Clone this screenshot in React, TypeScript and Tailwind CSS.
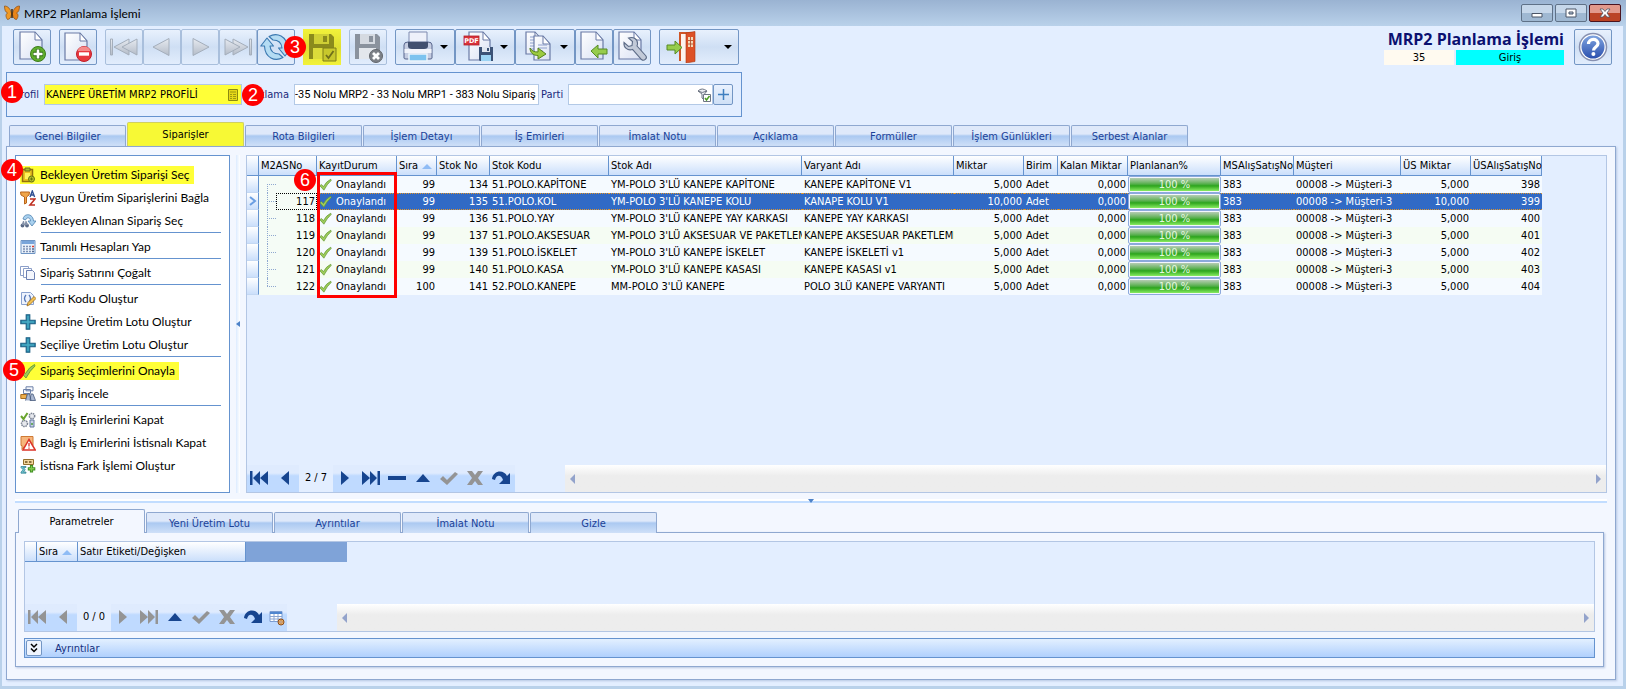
import React from "react";
import clsx from "clsx";

interface Order {
  no: string;
  sira: string;
  stokNo: string;
  stokKodu: string;
  stokAdi: string;
  varyant: string;
  miktar: string;
  usNo: string;
}

const orders: Order[] = [
  { no: "", sira: "99", stokNo: "134", stokKodu: "51.POLO.KAPİTONE", stokAdi: "YM-POLO 3'LÜ KANEPE KAPİTONE", varyant: "KANEPE KAPİTONE V1", miktar: "5,000", usNo: "398" },
  { no: "117", sira: "99", stokNo: "135", stokKodu: "51.POLO.KOL", stokAdi: "YM-POLO 3'LÜ KANEPE KOLU", varyant: "KANAPE KOLU V1", miktar: "10,000", usNo: "399" },
  { no: "118", sira: "99", stokNo: "136", stokKodu: "51.POLO.YAY", stokAdi: "YM-POLO 3'LÜ KANEPE YAY KARKASI", varyant: "KANEPE YAY KARKASI", miktar: "5,000", usNo: "400" },
  { no: "119", sira: "99", stokNo: "137", stokKodu: "51.POLO.AKSESUAR", stokAdi: "YM-POLO 3'LÜ AKSESUAR VE PAKETLEME", varyant: "KANEPE AKSESUAR PAKETLEME", miktar: "5,000", usNo: "401" },
  { no: "120", sira: "99", stokNo: "139", stokKodu: "51.POLO.İSKELET", stokAdi: "YM-POLO 3'LÜ KANEPE İSKELET", varyant: "KANEPE İSKELETİ v1", miktar: "5,000", usNo: "402" },
  { no: "121", sira: "99", stokNo: "140", stokKodu: "51.POLO.KASA", stokAdi: "YM-POLO 3'LÜ KANEPE KASASI", varyant: "KANEPE KASASI v1", miktar: "5,000", usNo: "403" },
  { no: "122", sira: "100", stokNo: "141", stokKodu: "52.POLO.KANEPE", stokAdi: "MM-POLO 3'LÜ KANEPE", varyant: "POLO 3LÜ KANEPE VARYANTI", miktar: "5,000", usNo: "404" },
];

const columns = [
  { label: "", width: "w-[12px]" },
  { label: "M2ASNo", width: "w-[58px]" },
  { label: "KayıtDurum", width: "w-[80px]" },
  { label: "Sıra", width: "w-[40px]", sorted: true },
  { label: "Stok No", width: "w-[53px]" },
  { label: "Stok Kodu", width: "w-[119px]" },
  { label: "Stok Adı", width: "w-[193px]" },
  { label: "Varyant Adı", width: "w-[152px]" },
  { label: "Miktar", width: "w-[70px]" },
  { label: "Birim", width: "w-[34px]" },
  { label: "Kalan Miktar", width: "w-[70px]" },
  { label: "Planlanan%", width: "w-[93px]" },
  { label: "MSAlışSatışNo", width: "w-[73px]" },
  { label: "Müşteri", width: "w-[107px]" },
  { label: "ÜS Miktar", width: "w-[70px]" },
  { label: "ÜSAlışSatışNo", width: "w-[71px]" },
];

const mainTabs = [
  "Genel Bilgiler",
  "Siparişler",
  "Rota Bilgileri",
  "İşlem Detayı",
  "İş Emirleri",
  "İmalat Notu",
  "Açıklama",
  "Formüller",
  "İşlem Günlükleri",
  "Serbest Alanlar",
];

const detailTabs = ["Parametreler", "Yeni Üretim Lotu", "Ayrıntılar", "İmalat Notu", "Gizle"];

/* ---------- toolbar icons (32x32) ---------- */

const Page = ({ x = 6, y = 1, w = 22, h = 27 }: { x?: number; y?: number; w?: number; h?: number }) => (
  <>
    <path
      d={`M${x} ${y}h${w - 7}l7 8v${h - 8}h-${w}z`}
      fill="url(#paper)"
      stroke="#6a7ba6"
      strokeWidth="1.2"
    />
    <path d={`M${x + w - 7} ${y}v8h7z`} fill="#fff" stroke="#6a7ba6" strokeWidth="1" />
  </>
);

const Icon32 = ({ children }: { children: React.ReactNode }) => (
  <svg viewBox="0 0 32 32" className="size-8 shrink-0" aria-hidden="true">
    {children}
  </svg>
);

const NewIcon = () => (
  <Icon32>
    <Page x={4} />
    <circle cx="22" cy="23" r="7.500" fill="#5fae2c" stroke="#3d7d1c" />
    <path d="M22 18v10M17 23h10" stroke="#2f6a14" strokeWidth="4.400" />
    <path d="M22 18.500v9M17.500 23h9" stroke="#fff" strokeWidth="2.600" />
  </Icon32>
);

const DeleteIcon = () => (
  <Icon32>
    <Page x={3} y={2} />
    <circle cx="22" cy="23" r="7.500" fill="#e8383f" stroke="#c01f2a" />
    <path d="M15.500 20a7 7 0 0 1 13 0z" fill="#f58a8a" />
    <path d="M17 23h10" stroke="#fff" strokeWidth="3.400" />
  </Icon32>
);

const FirstIcon = () => (
  <Icon32>
    <g fill="url(#grey)" stroke="#a4aebb">
      <path d="M2.500 8h2v16h-2z" />
      <path d="M21 8v16L6 16z" />
      <path d="M29 8v16L14 16z" />
    </g>
  </Icon32>
);
const PrevIcon = () => (
  <Icon32>
    <path d="M23 7.500v17L7 16z" fill="url(#grey)" stroke="#a4aebb" />
  </Icon32>
);
const NextIcon = () => (
  <Icon32>
    <path d="M9 7.500v17L25 16z" fill="url(#grey)" stroke="#a4aebb" />
  </Icon32>
);
const LastIcon = () => (
  <Icon32>
    <g fill="url(#grey)" stroke="#a4aebb">
      <path d="M11 8v16l15-8z" />
      <path d="M3 8v16l15-8z" />
      <path d="M27.500 8h2v16h-2z" />
    </g>
  </Icon32>
);

const RefreshIcon = () => (
  <Icon32>
    <g fill="#b4dcf3" stroke="#3a78b0" strokeWidth="1.100" strokeLinejoin="round">
      <path d="M.8 15 7 7l6.500 8H10c.5 5 4 8 9 8l4 3.500C15 31 5 27 4.500 15z" />
      <path d="M31.200 17 25 25l-6.500-8H22c-.5-5-4-8-9-8L9 5.500C17 1 27 5 27.500 17z" />
    </g>
  </Icon32>
);

const Floppy = ({ body, metal, label }: { body: string; metal: string; label: string }) => (
  <>
    <path d="M3 3h22l3 3v22H3z" fill={body} />
    <path d="M8 3h15v10H8z" fill={metal} />
    <path d="M17 5h4v6h-4z" fill={body} />
    <path d="M7 17h17v11H7z" fill={label} />
  </>
);

const SaveOkIcon = () => (
  <Icon32>
    <Floppy body="#8b8b1c" metal="#cfcf35" label="#dcdc3a" />
    <path d="M17 17h13v13H17z" fill="#c8c82c" stroke="#7f7f1a" />
    <path d="m20 24 2.500 3 5-7" fill="none" stroke="#70701a" strokeWidth="1.800" />
  </Icon32>
);
const SaveCancelIcon = () => (
  <Icon32>
    <Floppy body="#8a929d" metal="#d5dae1" label="#e3e7ec" />
    <circle cx="24" cy="25" r="6.500" fill="#7d8187" stroke="#62666c" />
    <path d="m21 22 6 6m0-6-6 6" stroke="#fff" strokeWidth="2.800" />
  </Icon32>
);

const PrintIcon = () => (
  <Icon32>
    <path d="M7 1h18v13H7z" fill="#eef1fa" stroke="#7f8bb0" />
    <path d="M2 14q0-3 4-3h20q4 0 4 3v13q0 1-2 1H4q-2 0-2-1z" fill="#c5cde2" stroke="#56648c" />
    <path d="M6 11h20v4q0 3-4 3H10q-4 0-4-3z" fill="#42506f" />
    <path d="M2.500 18h27v4h-27z" fill="#f1f4fb" />
    <path d="M7 23h18v7H7z" fill="#7cc3ef" stroke="#eaf4fc" strokeWidth="1.500" />
  </Icon32>
);

const PdfIcon = () => (
  <Icon32>
    <Page x={7} w={21} h={28} />
    <rect x="2" y="5" width="15" height="9" fill="#d9323a" stroke="#b11f28" strokeWidth=".8" />
    <text x="9.500" y="12.200" textAnchor="middle" fontSize="6.500" fontWeight="700" fill="#fff" fontFamily="DejaVu Sans">
      PDF
    </text>
    <path d="M17 16h14v14H18l-1-1z" fill="#3c5377" />
    <path d="M20 16h8v5h-8z" fill="#dfe6f0" />
    <path d="M25 17h2v3h-2z" fill="#3c5377" />
    <path d="M19 24h10v6H19z" fill="#9cd4f4" />
  </Icon32>
);

const CopyIcon = () => (
  <Icon32>
    <Page x={4} y={1} w={16} h={22} />
    <path d="M8 6h5M8 9h8M8 12h5M8 15h4M8 18h4" stroke="#8ea0cc" />
    <Page x={12} y={5} w={16} h={24} />
    <path d="M16 14h9M16 17h9M16 20h5" stroke="#8ea0cc" />
    <path d="M8 17c2 3 4 4 8 4v-4l8 6-8 5v-3.500c-5 0-8-3-8-7.500z" fill="#9ccb3f" stroke="#56821f" />
  </Icon32>
);

const ImportIcon = () => (
  <Icon32>
    <Page x={3} />
    <path d="M13 20l7-6v4h9v5h-9v4z" fill="#96cc4c" stroke="#568a25" />
  </Icon32>
);

const ToolIcon = () => (
  <Icon32>
    <Page x={3} />
    <path
      d="M8 11.500l4.500 4 3.500-1 .5-4-4-3.500c5-1.500 9 1 9 5.500 0 1-.3 2-.5 2.500l9 10c1.500 2.500-2 5.500-4.500 3.500l-9-10c-5 1.500-9-2-8.500-7z"
      fill="#c2cad8"
      stroke="#5c6b86"
      strokeWidth="1.100"
    />
  </Icon32>
);

const ExitIcon = () => (
  <Icon32>
    <path d="M14 30V2h14v27" fill="#fdf3ee" stroke="#cf5526" strokeWidth="2" />
    <path d="M20 2l9-1.500v30L20 32z" fill="#dd5127" stroke="#a93914" strokeWidth=".6" />
    <path d="M22 6h5v10h-5z" fill="#f4d9b8" />
    <path d="M24.500 6v10M22 9.500h5M22 13h5" stroke="#b4502d" strokeWidth=".9" />
    <path d="M1 14h8v-4l7 6.500L9 23v-4H1z" fill="#96cc4c" stroke="#568a25" />
  </Icon32>
);

const HelpIcon = () => (
  <Icon32>
    <circle cx="16" cy="16" r="13.500" fill="#fff" stroke="#8790b0" strokeWidth="1.500" />
    <circle cx="16" cy="16" r="11.500" fill="url(#help)" />
    <path d="M11.500 13c0-6 9.500-6 9.500-.5 0 3.500-4.500 3.500-4.500 7" fill="none" stroke="#fff" strokeWidth="3.200" />
    <circle cx="16.400" cy="23" r="2" fill="#fff" />
  </Icon32>
);

/* ---------- side menu icons (16x16) ---------- */

const Icon16 = ({ children }: { children: React.ReactNode }) => (
  <svg viewBox="0 0 16 16" className="size-4 shrink-0" aria-hidden="true">
    {children}
  </svg>
);

const Tick = () => (
  <path d="M1 9.500 3 8l2.500 2.500Q9 4 14.500 1.500L15 3Q10 7.500 6 15z" fill="#9ccb5a" stroke="#5d9130" strokeWidth=".8" />
);

const ClipboardIcon = () => (
  <Icon16>
    <path d="M2.500 2.500h10v12h-10z" fill="#e9c320" stroke="#94700c" strokeWidth="1.500" />
    <path d="M5 1h5v3H5z" fill="#a8b530" stroke="#6a6a20" />
    <path d="M5 6h5v6H5z" fill="#fff45a" />
    <circle cx="11.500" cy="12" r="3" fill="#b7c02c" stroke="#66740f" />
    <path d="M11.500 10.500v3M10 12h3" stroke="#66740f" />
  </Icon16>
);
const FilterSortIcon = () => (
  <Icon16>
    <path d="M.5 2h9L9 5 6.500 7v6l-2 1V7L1 5z" fill="#f0a64a" stroke="#b9651c" />
    <path d="m10 7 2.300-6L14.600 7M11 5h3" fill="none" stroke="#2f4f92" strokeWidth="1.400" />
    <path d="M10 9h5l-5 6h5" fill="none" stroke="#c03022" strokeWidth="1.600" />
  </Icon16>
);
const SearchOrderIcon = () => (
  <Icon16>
    <path d="M3 6c1-6 10-6 10.500 2H16l-4 5-4-5h2.500c0-4-4-4-5-1z" fill="#a9d1ef" stroke="#4b80ae" strokeWidth=".8" />
    <circle cx="2.500" cy="12.500" r="1.900" fill="#5a6a86" />
    <circle cx="7" cy="12.500" r="1.900" fill="#5a6a86" />
    <path d="M1.500 12 3 8h1l.8 3L5.500 8h1L8 12z" fill="#8491a8" />
  </Icon16>
);
const CalculatorIcon = () => (
  <Icon16>
    <path d="M1 1.500h14v13H1z" fill="#e9f1fa" stroke="#6d94c4" />
    <path d="M1.500 2h13v3h-13z" fill="#78a5da" />
    <path d="M3 7.500h2m1 0h2m1 0h2M3 10h2m1 0h2m1 0h2M3 12.500h2m1 0h2m1 0h2" stroke="#7d91b4" strokeWidth="1.500" />
    <path d="M12 7.500h2" stroke="#e23e2c" strokeWidth="1.500" />
    <path d="M12 10h2m-2 2.500h2" stroke="#56698e" strokeWidth="1.500" />
  </Icon16>
);
const DuplicateIcon = () => (
  <Icon16>
    <path d="M.5 1.500h8v9h-8z" fill="#fff" stroke="#8c9fc9" />
    <path d="M3.500 3.500h8v9h-8z" fill="#fff" stroke="#8c9fc9" />
    <path d="M6.500 5.500h6l2 2v7h-8z" fill="#f3f6fd" stroke="#6d81b3" />
  </Icon16>
);
const CodeIcon = () => (
  <Icon16>
    <path d="M1.500 1.500h9l3 3v9h-12z" fill="#eef3fd" stroke="#8aa2cf" />
    <path d="M6 4Q3 7.500 6 11M9 4q3 3.500 0 7" fill="none" stroke="#5779b8" strokeWidth="1.300" />
    <path d="m7 15 1-3.500L14 5.500l2 2-6 6z" fill="#f1c053" stroke="#9a6a1c" strokeWidth=".8" />
  </Icon16>
);
const PlusIcon = () => (
  <Icon16>
    <path d="M6.200.8h3.600v5.400h5.400v3.600H9.800v5.400H6.200V9.800H.8V6.200h5.400z" fill="#2b8eae" stroke="#1b5f85" strokeWidth="1.100" />
    <path d="M8 2v12M2 8h12" stroke="#53b2ca" strokeWidth="1" />
  </Icon16>
);
const ApproveIcon = () => (
  <Icon16>
    <Tick />
  </Icon16>
);
const InspectIcon = () => (
  <Icon16>
    <path d="M6 .8h7v4H6zM3.500 3.500h7v4h-7z" fill="#f6f8fd" stroke="#6d81a8" />
    <path d="M.8 8.500h6v4h-6z" fill="#edaf4c" stroke="#a86d20" />
    <path d="M5.500 14.500 7.500 8h2L11 14.500M10 14.500 11 8h2l2.500 6.500z" fill="#a9b7d1" stroke="#475a7c" strokeWidth=".8" />
  </Icon16>
);
const GearsIcon = () => (
  <Icon16>
    <circle cx="12" cy="4" r="2.700" fill="#e7e9ee" stroke="#7b8393" strokeWidth="1.500" strokeDasharray="1.500 .7" />
    <circle cx="4.500" cy="11.500" r="3" fill="#e7e9ee" stroke="#7b8393" strokeWidth="1.500" strokeDasharray="1.500 .7" />
    <path d="m1 4 2.500 3 4-6" fill="none" stroke="#6aa52e" strokeWidth="2" />
    <path d="M10 8h4v7h-4z" fill="#c7d1e6" stroke="#63779f" />
    <circle cx="12" cy="12" r="1" fill="#4a9c38" />
  </Icon16>
);
const WarningIcon = () => (
  <Icon16>
    <path d="M1 1.500h12v9H5l-3 4v-4H1z" fill="#f6b67c" stroke="#cf7a34" />
    <path d="m9 4.500 6.300 10.500H3z" fill="#fff" stroke="#dc3328" strokeWidth="1.500" />
    <path d="M9 8v3.500m0 1v1.300" stroke="#dc3328" strokeWidth="1.300" />
  </Icon16>
);
const DiffIcon = () => (
  <Icon16>
    <path d="M3.500 1.500h10v5h-10z" fill="#f3d79d" stroke="#94702c" />
    <path d="M5 4h2.500M9 4h2.500" stroke="#6c5020" strokeWidth="1.600" />
    <path d="M1 8.500h5v1H3.500l1.700 2.200L3.500 14H6v1.200H1v-1l2-2.500-2-2.200z" fill="#6fc3cd" stroke="#2b7d90" strokeWidth=".7" />
    <path d="M11.500 7v7.500M7.800 10.800h7.500" stroke="#3e8d22" strokeWidth="3.200" />
    <path d="M11.500 8v5.500M8.800 10.800h5.500" stroke="#80c94c" strokeWidth="1.400" />
  </Icon16>
);

const menuItems = [
  { label: "Bekleyen Üretim Siparişi Seç", icon: <ClipboardIcon />, step: 4 },
  { label: "Uygun Üretim Siparişlerini Bağla", icon: <FilterSortIcon /> },
  { label: "Bekleyen Alınan Sipariş Seç", icon: <SearchOrderIcon />, divider: true },
  { label: "Tanımlı Hesapları Yap", icon: <CalculatorIcon />, divider: true },
  { label: "Sipariş Satırını Çoğalt", icon: <DuplicateIcon />, divider: true },
  { label: "Parti Kodu Oluştur", icon: <CodeIcon /> },
  { label: "Hepsine Üretim Lotu Oluştur", icon: <PlusIcon /> },
  { label: "Seçiliye Üretim Lotu Oluştur", icon: <PlusIcon />, divider: true },
  { label: "Sipariş Seçimlerini Onayla", icon: <ApproveIcon />, step: 5 },
  { label: "Sipariş İncele", icon: <InspectIcon />, divider: true },
  { label: "Bağlı İş Emirlerini Kapat", icon: <GearsIcon /> },
  { label: "Bağlı İş Emirlerini İstisnalı Kapat", icon: <WarningIcon /> },
  { label: "İstisna Fark İşlemi Oluştur", icon: <DiffIcon /> },
];

/* ---------- shared pieces ---------- */

const Step = ({ n, className }: { n: number; className: string }) => (
  <span
    className={clsx(
      "absolute z-20 flex size-[22px] items-center justify-center rounded-full bg-[#ff0000] font-['Liberation_Sans'] text-[18px] leading-none text-white",
      className
    )}
  >
    {n}
  </span>
);

interface ToolButtonProps {
  label: string;
  icon: React.ReactNode;
  width?: string;
  drop?: boolean;
  dim?: boolean;
  className?: string;
}

const ToolButton = ({ label, icon, width = "w-[38px]", drop, dim, className }: ToolButtonProps) => (
  <button
    type="button"
    aria-label={label}
    className={clsx(
      "flex h-9 shrink-0 items-center rounded-xs border bg-linear-to-b from-[#e8f1fd] via-[#cfdff4] to-[#e2edfc]",
      dim ? "border-[#a9bfdc]" : "border-[#7396c4]",
      drop ? "justify-between pr-1.5 pl-1.5" : "justify-center",
      width,
      className
    )}
  >
    {icon}
    {drop && <svg viewBox="0 0 8 4" className="h-1 w-2" aria-hidden="true"><path d="M0 0h8L4 4z" /></svg>}
  </button>
);

const Tab = ({ label, width, active, marked }: { label: string; width: string; active?: boolean; marked?: boolean }) => (
  <button
    type="button"
    role="tab"
    aria-selected={!!active}
    className={clsx(
      "shrink-0 rounded-t-xs border border-b-0 text-center",
      width,
      active
        ? "h-6 text-black"
        : "h-[21px] border-[#8fa8d0] bg-linear-to-b from-[#dfe9fa] from-40% via-[#abc9f1] via-50% to-[#cfe0f8] text-[#1b4298]",
      active && (marked ? "border-[#d0d060] bg-[#f7f935]" : "border-[#8fa8d0] bg-[#f3f7ff]")
    )}
  >
    {label}
  </button>
);

const SortMark = () => (
  <svg viewBox="0 0 10 5" className="ml-1 inline h-[5px] w-[10px] align-middle" aria-hidden="true">
    <path d="M0 5h10L5 0z" fill="#8fbcf5" />
  </svg>
);

const navShapes = {
  first: "M0 1h2.500v14H0zM10 1v14L3 8zM18 1v14L10 8z",
  prev: "M13 1v14L5 8z",
  next: "M5 1v14l8-7z",
  last: "M15.500 1H18v14h-2.500zM0 1v14l8-7zM8 1v14l7-7z",
  minus: "M0 6h18v4H0z",
  up: "M9 4l7 8H2z",
  check: "M0 9l3-3 4 4 8-8 3 2L7 15z",
  cross: "M1 1h5l3 4 3-4h5l-5 7 5 7h-5l-3-4-3 4H1l5-7z",
  redo: "M0 9C1 0 12-1 15 6l3-3v11H7l4-4C9 4 4 5 3 10z",
};

const NavButton = ({ shape, label, off, width }: { shape: keyof typeof navShapes; label: string; off?: boolean; width: string }) => (
  <button type="button" aria-label={label} className={clsx("flex h-full items-center justify-center pr-0.5 pb-0.5", width)}>
    <svg viewBox="0 0 18 16" className="h-4 w-[18px]" aria-hidden="true">
      <path d={navShapes[shape]} fill={off ? "#949494" : "#17458f"} />
    </svg>
  </button>
);

const navBg = "flex h-full bg-linear-to-b from-[#dfebfe] from-30% to-[#bfdaff] to-40%";

const ScrollTrack = ({ className }: { className: string }) => (
  <div className={clsx("flex h-full flex-1 items-center justify-between bg-linear-to-b from-white to-[#ededed] to-40% px-[5px]", className)}>
    <svg viewBox="0 0 5 10" className="h-[10px] w-[5px]" aria-hidden="true"><path d="M5 0v10L0 5z" fill="#93a3cb" /></svg>
    <svg viewBox="0 0 5 10" className="h-[10px] w-[5px]" aria-hidden="true"><path d="M0 0v10l5-5z" fill="#93a3cb" /></svg>
  </div>
);

const headCell = "border-r border-b border-[#6593cf] bg-linear-to-b from-white to-[#cbdffb] pl-0.5 text-left font-normal";

const OrderRow = ({ order, index }: { order: Order; index: number }) => {
  const selected = index === 1;
  const last = index === orders.length - 1;
  const line = selected ? "border-y border-dotted border-[#e0952c]" : "";
  return (
    <tr
      className={clsx(
        "h-[17px]",
        selected ? "bg-[#316ac5] text-white" : index % 2 ? "bg-[#f5fcf3]" : "bg-[#f5faff]"
      )}
    >
      <td className="border-r border-b border-[#6593cf] border-b-[#c4d8f3] bg-linear-to-b from-white to-[#cbdffb]">
        {selected && (
          <svg viewBox="0 0 8 10" className="mx-auto h-[10px] w-2" aria-hidden="true">
            <path d="m1 1 5 4-5 4" fill="none" stroke="#6a9ee2" strokeWidth="2" />
          </svg>
        )}
      </td>
      <td className="relative bg-[#f5fcf6] p-0 text-right text-black">
        <span
          className={clsx(
            "absolute left-2 w-0 border-l border-dotted border-[#8fa8d0]",
            index === 0 ? "top-2 bottom-0" : last ? "top-0 h-2" : "inset-y-0"
          )}
        />
        <span className="absolute top-2 left-2 w-[9px] border-t border-dotted border-[#8fa8d0]" />
        <span className={clsx("ml-[17px] block h-[17px] border pr-px", selected ? "border-dotted border-black" : "border-transparent")}>
          {order.no}
        </span>
      </td>
      <td className={line}>
        <span className="flex h-[15px] items-center gap-1 pl-0.5">
          <svg viewBox="0 0 16 16" className="size-[13px]" aria-hidden="true"><Tick /></svg>
          Onaylandı
        </span>
      </td>
      <td className={clsx("pr-0.5 text-right", line)}>{order.sira}</td>
      <td className={clsx("pr-0.5 text-right", line)}>{order.stokNo}</td>
      <td className={clsx("overflow-hidden pl-0.5", line)}>{order.stokKodu}</td>
      <td className={clsx("overflow-hidden pl-0.5", line)}>{order.stokAdi}</td>
      <td className={clsx("overflow-hidden pl-0.5", line)}>{order.varyant}</td>
      <td className={clsx("pr-0.5 text-right", line)}>{order.miktar}</td>
      <td className={clsx("pl-0.5", line)}>Adet</td>
      <td className={clsx("pr-0.5 text-right", line)}>0,000</td>
      <td>
        <div className="h-[17px] rounded-xs border border-[#8ca9dc] bg-[#f3f6fd] p-px">
          <div className="h-full bg-linear-to-b from-[#b5ccb3] via-[#2aa51a] via-60% to-[#86ec60] text-center leading-[13px] text-[#e6f8e0]">
            100 %
          </div>
        </div>
      </td>
      <td className={clsx("pl-0.5", line)}>383</td>
      <td className={clsx("pl-0.5", line)}>00008 -&gt; Müşteri-3</td>
      <td className={clsx("pr-0.5 text-right", line)}>{order.miktar}</td>
      <td className={clsx("pr-0.5 text-right", line)}>{order.usNo}</td>
    </tr>
  );
};

const captionButton = "flex h-[18px] w-8 items-center justify-center rounded-xs border";

const App: React.FC = () => {
  return (
    <div className="flex min-h-screen flex-col overflow-hidden bg-[#b9d1ea] font-['DejaVu_Sans_Condensed','Noto_Sans',sans-serif] text-[11px] leading-[15px] text-black">
      <svg className="absolute size-0" aria-hidden="true">
        <defs>
          <linearGradient id="paper" x2="1" y2="1">
            <stop stopColor="#fff" />
            <stop offset="1" stopColor="#d9e1f3" />
          </linearGradient>
          <linearGradient id="grey" y2="1" x2="0">
            <stop stopColor="#e6eaf0" />
            <stop offset="1" stopColor="#b4bcc8" />
          </linearGradient>
          <linearGradient id="help" y2="1" x2="0">
            <stop stopColor="#7fa4e0" />
            <stop offset="1" stopColor="#2b50ae" />
          </linearGradient>
        </defs>
      </svg>

      {/* Title bar */}
      <header className="flex h-[26px] shrink-0 items-center bg-linear-to-b from-[#9ab3d2] to-[#b9d1ea] pr-[5px] pl-1">
        <svg viewBox="0 0 16 16" className="size-4" aria-hidden="true">
          <path d="M7.500 8.500C6.500 4 4 1 .5 1c0 4 1 6 3 7-2 1-2 4 0 6.500 2 0 3.500-2 4-5z" fill="#f09a26" stroke="#8a4c14" strokeWidth=".7" />
          <path d="M8.500 8.500C9.500 4 12 1 15.500 1c0 4-1 6-3 7 2 1 2 4 0 6.500-2 0-3.500-2-4-5z" fill="#e8851c" stroke="#8a4c14" strokeWidth=".7" />
          <path d="M8 4v9" stroke="#432608" strokeWidth="1.500" />
        </svg>
        <span className="ml-1 flex-1 pt-px font-['Lato',sans-serif] text-[12px]">MRP2 Planlama İşlemi</span>
        <div className="flex gap-0.5">
          <button type="button" aria-label="Simge durumuna küçült" className={clsx(captionButton, "border-[#5f7187] bg-linear-to-b from-[#c6d7ea] from-50% to-[#9fb8d2] to-50%")}>
            <svg viewBox="0 0 12 12" className="size-3" aria-hidden="true"><path d="M1 6.500h10v3.500H1z" fill="#fff" stroke="#4b5566" /></svg>
          </button>
          <button type="button" aria-label="Ekranı kapla" className={clsx(captionButton, "border-[#5f7187] bg-linear-to-b from-[#c6d7ea] from-50% to-[#9fb8d2] to-50%")}>
            <svg viewBox="0 0 12 12" className="size-3" aria-hidden="true"><path d="M1 2h10v8H1zM4 5h4v2H4z" fill="#fff" fillRule="evenodd" stroke="#4b5566" /></svg>
          </button>
          <button type="button" aria-label="Kapat" className={clsx(captionButton, "border-[#4a1420] bg-linear-to-b from-[#e2998b] from-50% to-[#bb4325] to-50%")}>
            <svg viewBox="0 0 12 12" className="size-3" aria-hidden="true"><path d="M1 2h3l2 2.500L8 2h3L8 6l3 4H8L6 7.500 4 10H1l3-4z" fill="#fff" stroke="#4b5566" strokeWidth=".8" /></svg>
          </button>
        </div>
      </header>

      <div className="mr-[3px] mb-[3px] ml-0.5 flex flex-1 flex-col bg-[#e3eeff]">
        {/* Toolbar */}
        <div className="flex pt-[3px] pr-[11px] pl-[11px]">
          <ToolButton label="Yeni" icon={<NewIcon />} className="mr-2" />
          <ToolButton label="Sil" icon={<DeleteIcon />} className="mr-2" />
          <ToolButton label="İlk" icon={<FirstIcon />} dim />
          <ToolButton label="Önceki" icon={<PrevIcon />} dim />
          <ToolButton label="Sonraki" icon={<NextIcon />} dim />
          <ToolButton label="Son" icon={<LastIcon />} dim />
          <div className="relative mr-2">
            <ToolButton label="Yenile" icon={<RefreshIcon />} />
            <Step n={3} className="top-[7px] -right-[11px]" />
          </div>
          <button type="button" aria-label="Kaydet" className="mr-2 flex h-9 w-[38px] items-center justify-center bg-linear-to-b from-[#f2f23a] via-[#dede33] to-[#f2f23a]">
            <SaveOkIcon />
          </button>
          <ToolButton label="İptal" icon={<SaveCancelIcon />} dim className="mr-2" />
          <ToolButton label="Yazdır" icon={<PrintIcon />} width="w-[60px]" drop />
          <ToolButton label="PDF kaydet" icon={<PdfIcon />} width="w-[60px]" drop />
          <ToolButton label="Kopyala" icon={<CopyIcon />} width="w-[60px]" drop />
          <ToolButton label="İçe aktar" icon={<ImportIcon />} />
          <ToolButton label="Araçlar" icon={<ToolIcon />} className="mr-2" />
          <ToolButton label="Çıkış" icon={<ExitIcon />} width="w-[80px]" drop />

          <div className="mr-[10px] ml-auto flex flex-col justify-between">
            <h1 className="text-right font-['Open_Sans',sans-serif] text-[16px] leading-5 font-bold text-[#0a1070]">
              MRP2 Planlama İşlemi
            </h1>
            <div className="flex gap-0.5 text-center">
              <span className="w-[70px] bg-[#fffaf0]">35</span>
              <span className="w-[108px] bg-[#00ffff]">Giriş</span>
            </div>
          </div>
          <ToolButton label="Yardım" icon={<HelpIcon />} />
        </div>

        {/* Profile fields */}
        <div className="mt-[7px] ml-1 flex h-[45px] w-[736px] items-center border border-[#6593cf] text-[#1a2a7c]">
          <div className="relative flex items-center">
            <Step n={1} className="-left-1.5 bottom-0.5" />
            <label htmlFor="profil" className="w-[37px] pr-[5px] text-right">Profil</label>
            <input
              id="profil"
              readOnly
              defaultValue="KANEPE ÜRETİM MRP2 PROFİLİ"
              className="h-[21px] w-[198px] border border-[#b3c9e6] bg-[#ffff37] px-px text-black"
            />
            <svg viewBox="0 0 10 12" className="absolute right-1 h-3 w-[10px]" aria-hidden="true">
              <path d="M.5.5h9v11h-9z" fill="#e6d817" stroke="#8b8a10" />
              <path d="M2 3h6M2 5.500h2m1 0h3M2 7.500h2m1 0h3M2 9.500h2m1 0h3" stroke="#8b8a10" strokeWidth=".8" />
            </svg>
          </div>
          <div className="relative flex items-center">
            <Step n={2} className="left-0" />
            <label htmlFor="aciklama" className="w-[52px] pr-[5px] text-right">Açıklama</label>
            <input
              id="aciklama"
              readOnly
              defaultValue="-35 Nolu MRP2 - 33 Nolu MRP1 - 383 Nolu Sipariş"
              className="h-[21px] w-[245px] border border-[#b3c9e6] bg-white px-0 font-['Roboto',sans-serif] text-black"
            />
          </div>
          <div className="relative flex items-center">
            <label htmlFor="parti" className="w-[29px] pl-0.5">Parti</label>
            <input id="parti" className="h-[21px] w-[145px] border border-[#b3c9e6] bg-white px-px text-black" />
            <svg viewBox="0 0 14 14" className="absolute right-[22px] size-[14px]" aria-hidden="true">
              <path d="M1 3q4-4 9 0L7.500 6v6L5 10V6z" fill="#eceef2" stroke="#6f7684" />
              <path d="M1 3q4 3 9 0" fill="none" stroke="#6f7684" />
              <path d="M6.500 6.500h7v7h-7z" fill="#fff" stroke="#6f7684" />
              <path d="m8 10 1.500 2L12.500 8" fill="none" stroke="#4a9c22" strokeWidth="1.500" />
            </svg>
            <button type="button" aria-label="Parti ekle" className="flex h-[21px] w-5 items-center justify-center rounded-xs border border-[#7396c4] bg-linear-to-b from-[#eaf2fe] to-[#cfe0f6]">
              <svg viewBox="0 0 11 11" className="size-[11px]" aria-hidden="true"><path d="M5.500 0v11M0 5.500h11" stroke="#3f7fc0" strokeWidth="1.500" /></svg>
            </button>
          </div>
        </div>

        {/* Main tabs */}
        <div role="tablist" className="mt-[5px] flex items-end gap-px pl-[7px]">
          {mainTabs.map((tab) => (
            <Tab key={tab} label={tab} width="w-[117px]" active={tab === "Siparişler"} marked />
          ))}
        </div>

        <main className="mr-[7px] mb-1.5 ml-1 flex flex-1 flex-col border border-[#8fa8d0] bg-[#f3f7ff] px-2 pt-2 pb-3 shadow-[1px_1px_2px_#b6c6e2]">
          <div className="flex flex-1">
            {/* Side menu */}
            <nav className="w-[215px] shrink-0 border border-[#6593cf] bg-white pt-[7px] pb-3 font-['Lato',sans-serif] text-[12px]">
              {menuItems.map((item) => (
                <div key={item.label} className="relative">
                  {item.step && <Step n={item.step} className={item.step === 4 ? "-top-1 -left-[15px]" : "top-0 -left-[13px]"} />}
                  <button type="button" className="flex h-[23px] w-full items-center pl-1 text-left whitespace-nowrap">
                    <span className={clsx("flex h-[18px] items-center", item.step && "bg-[#ffff37] pr-1")}>
                      {item.icon}
                      <span className="ml-1">{item.label}</span>
                    </span>
                  </button>
                  {item.divider && <hr className="mr-2 mb-0.5 ml-[25px] border-[#6593cf]" />}
                </div>
              ))}
            </nav>

            <div className="ml-[6px] flex w-1 shrink-0 items-center bg-linear-to-r from-[#dcebff] to-white">
              <svg viewBox="0 0 4 6" className="h-1.5 w-1" aria-hidden="true"><path d="M4 0v6L0 3z" fill="#4d82c8" /></svg>
            </div>

            {/* Orders grid */}
            <section className="relative ml-[6px] flex min-w-0 flex-1 flex-col border border-[#b3c6e4] bg-[#e3eeff]">
              <div className="flex-1 overflow-hidden">
                <table className="w-[1295px] table-fixed border-separate border-spacing-0 whitespace-nowrap [&_td]:leading-[15px]">
                  <thead>
                    <tr className="h-5">
                      {columns.map((col, i) => (
                        <th key={i} scope="col" className={clsx(headCell, col.width)}>
                          {col.label}
                          {col.sorted && <SortMark />}
                        </th>
                      ))}
                    </tr>
                  </thead>
                  <tbody>
                    {orders.map((order, i) => (
                      <OrderRow key={order.usNo} order={order} index={i} />
                    ))}
                  </tbody>
                </table>
              </div>
              <div className="absolute top-4 left-[70px] z-10 h-[126px] w-[80px] border-3 border-[#ff0000]" />
              <Step n={6} className="top-[13px] left-[47px]" />

              <div className="flex h-[27px]">
                <div className={navBg}>
                  <NavButton shape="first" label="İlk kayıt" width="w-[26px]" />
                  <NavButton shape="prev" label="Önceki kayıt" width="w-[26px]" />
                </div>
                <span className="w-[34px] text-center leading-[25px]">2 / 7</span>
                <div className={navBg}>
                  <NavButton shape="next" label="Sonraki kayıt" width="w-[26px]" />
                  <NavButton shape="last" label="Son kayıt" width="w-[26px]" />
                  <NavButton shape="minus" label="Kaydı sil" width="w-[26px]" />
                  <NavButton shape="up" label="Düzenle" width="w-[26px]" />
                  <NavButton shape="check" label="Onayla" off width="w-[26px]" />
                  <NavButton shape="cross" label="Vazgeç" off width="w-[26px]" />
                  <NavButton shape="redo" label="Yenile" width="w-[26px]" />
                </div>
                <ScrollTrack className="ml-[50px]" />
              </div>
            </section>
          </div>

          {/* Horizontal splitter */}
          <div className="mt-1.5 flex h-1 justify-center border-b-2 border-[#c2ddff] bg-white">
            <svg viewBox="0 0 6 4" className="h-1 w-1.5" aria-hidden="true"><path d="M0 0h6L3 4z" fill="#4d82c8" /></svg>
          </div>

          {/* Detail tabs */}
          <div role="tablist" className="relative z-10 mt-1.5 -mb-px flex items-end gap-px pl-[3px]">
            {detailTabs.map((tab) => (
              <Tab key={tab} label={tab} width="w-[127px]" active={tab === "Parametreler"} />
            ))}
          </div>
          <div className="mr-[3px] border border-[#8fa8d0] bg-[#f3f7ff] p-2 shadow-[1px_1px_2px_#b6c6e2]">
            <section className="flex h-[91px] flex-col border border-[#b3c6e4] bg-[#e3eeff]">
              <div className="flex flex-1 items-start">
                <table className="w-[221px] table-fixed border-separate border-spacing-0 whitespace-nowrap">
                  <thead>
                    <tr className="h-5">
                      <th className={clsx(headCell, "w-[12px]")} />
                      <th scope="col" className={clsx(headCell, "w-[41px]")}>Sıra<SortMark /></th>
                      <th scope="col" className={clsx(headCell, "w-[168px]")}>Satır Etiketi/Değişken</th>
                    </tr>
                  </thead>
                </table>
                <div className="h-5 w-[101px] bg-[#7fa3d8]" />
              </div>
              <div className="flex h-[27px]">
                <div className={navBg}>
                  <NavButton shape="first" label="İlk kayıt" off width="w-[26px]" />
                  <NavButton shape="prev" label="Önceki kayıt" off width="w-[26px]" />
                </div>
                <span className="w-[34px] text-center leading-[25px]">0 / 0</span>
                <div className={navBg}>
                  <NavButton shape="next" label="Sonraki kayıt" off width="w-[26px]" />
                  <NavButton shape="last" label="Son kayıt" off width="w-[26px]" />
                  <NavButton shape="up" label="Düzenle" width="w-[26px]" />
                  <NavButton shape="check" label="Onayla" off width="w-[26px]" />
                  <NavButton shape="cross" label="Vazgeç" off width="w-[26px]" />
                  <NavButton shape="redo" label="Yenile" width="w-[26px]" />
                  <button type="button" aria-label="Tablo ayarları" className="flex w-5 items-center justify-center">
                    <svg viewBox="0 0 16 16" className="size-4" aria-hidden="true">
                      <path d="M1 1.500h12v10H1z" fill="#fff" stroke="#7a9bd0" />
                      <path d="M1 2h12v2H1z" fill="#4f86cf" />
                      <path d="M1 6.500h12M1 9h12M5 4v8M9 4v8" stroke="#8aa5d2" />
                      <circle cx="12" cy="12" r="3" fill="#e8b06a" stroke="#8c4c1a" />
                      <circle cx="12" cy="12" r="1.100" fill="#fff" stroke="#8c4c1a" strokeWidth=".6" />
                    </svg>
                  </button>
                </div>
                <ScrollTrack className="ml-[50px]" />
              </div>
            </section>
            <div className="mt-1.5 flex h-5 items-center gap-[13px] border border-[#6593cf] bg-linear-to-b from-[#e3f0ff] to-[#b0d0fd] pl-px text-[#15307e]">
              <button type="button" aria-label="Ayrıntıları aç" className="flex size-4 items-center justify-center rounded-xs border border-[#7396c4] bg-[#eef4fe]">
                <svg viewBox="0 0 8 10" className="h-[10px] w-2" aria-hidden="true">
                  <path d="m1 1 3 3 3-3M1 5.500l3 3 3-3" fill="none" stroke="#000" strokeWidth="1.500" />
                </svg>
              </button>
              <span>Ayrıntılar</span>
            </div>
          </div>
        </main>
      </div>
    </div>
  );
};

export default App;
